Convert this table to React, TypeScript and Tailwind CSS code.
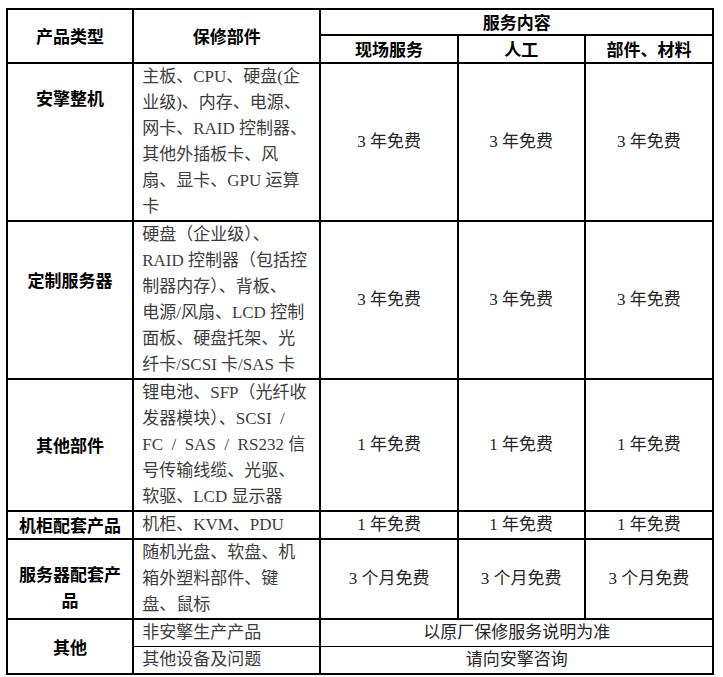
const serif = "font-['Liberation_Serif','Noto_Sans_CJK_SC',serif]"
const sans = "font-['Noto_Sans_CJK_SC','Noto_Sans',sans-serif]"

const td = 'border-2 border-black p-0'
const head = `${td} ${sans} font-bold text-black text-center align-middle`
const body = `${td} ${serif} text-[#3d3d3d] text-left align-top px-2 whitespace-nowrap`
const val = `${td} ${serif} text-[#262626] text-center align-middle`

function Lines({ lines }: { lines: string[] }) {
  return (
    <>
      {lines.map((l, i) => (
        <div key={i}>{l}</div>
      ))}
    </>
  )
}

type Row = {
  label: string[]
  labelClass?: string
  parts: string[]
  value: string
  h: string
}

const rows: Row[] = [
  {
    label: ['安擎整机'],
    labelClass: 'align-top pt-[21px]',
    parts: [
      '主板、CPU、硬盘(企',
      '业级)、内存、电源、',
      '网卡、RAID 控制器、',
      '其他外插板卡、风',
      '扇、显卡、GPU 运算',
      '卡',
    ],
    value: '3 年免费',
    h: 'h-[158px]',
  },
  {
    label: ['定制服务器'],
    labelClass: 'align-top pt-[45px]',
    parts: [
      '硬盘（企业级）、',
      'RAID 控制器（包括控',
      '制器内存）、背板、',
      '电源/风扇、LCD 控制',
      '面板、硬盘托架、光',
      '纤卡/SCSI 卡/SAS 卡',
    ],
    value: '3 年免费',
    h: 'h-[157px]',
  },
  {
    label: ['其他部件'],
    parts: [
      '锂电池、SFP（光纤收',
      '发器模块）、SCSI  /',
      'FC  /  SAS  /  RS232 信',
      '号传输线缆、光驱、',
      '软驱、LCD 显示器',
    ],
    value: '1 年免费',
    h: 'h-[129px]',
  },
  {
    label: ['机柜配套产品'],
    parts: ['机柜、KVM、PDU'],
    value: '1 年免费',
    h: 'h-[27px]',
  },
  {
    label: ['服务器配套产', '品'],
    labelClass: 'align-top pt-[21px]',
    parts: ['随机光盘、软盘、机', '箱外塑料部件、键', '盘、鼠标'],
    value: '3 个月免费',
    h: 'h-[80px]',
  },
]

export default function App() {
  return (
    <div className="min-h-screen bg-white pl-[6px] pt-[8px]">
      <table className="w-[708px] table-fixed border-collapse text-[17px] leading-[26px]">
        <colgroup>
          <col className="w-[126px]" />
          <col className="w-[187px]" />
          <col className="w-[137px]" />
          <col className="w-[127px]" />
          <col className="w-[128px]" />
        </colgroup>
        <thead>
          <tr className="h-[26px]">
            <th rowSpan={2} className={head}>
              产品类型
            </th>
            <th rowSpan={2} className={head}>
              保修部件
            </th>
            <th colSpan={3} className={`${head} leading-[22px]`}>
              服务内容
            </th>
          </tr>
          <tr className="h-[28px]">
            <th className={head}>现场服务</th>
            <th className={head}>人工</th>
            <th className={head}>部件、材料</th>
          </tr>
        </thead>
        <tbody>
          {rows.map((r, i) => (
            <tr key={i} className={r.h}>
              <td className={`${head} ${r.labelClass ?? ''}`}>
                <Lines lines={r.label} />
              </td>
              <td className={`${body} whitespace-pre`}>
                <Lines lines={r.parts} />
              </td>
              <td className={val}>{r.value}</td>
              <td className={val}>{r.value}</td>
              <td className={val}>{r.value}</td>
            </tr>
          ))}
          <tr className="h-[27px]">
            <td rowSpan={2} className={head}>
              其他
            </td>
            <td className={`${body} border-b border-b-black`}>非安擎生产产品</td>
            <td colSpan={3} className={`${val} border-b border-b-black`}>
              以原厂保修服务说明为准
            </td>
          </tr>
          <tr className="h-[26px]">
            <td className={`${body} border-t border-t-black`}>其他设备及问题</td>
            <td colSpan={3} className={`${val} border-t border-t-black`}>
              请向安擎咨询
            </td>
          </tr>
        </tbody>
      </table>
    </div>
  )
}
